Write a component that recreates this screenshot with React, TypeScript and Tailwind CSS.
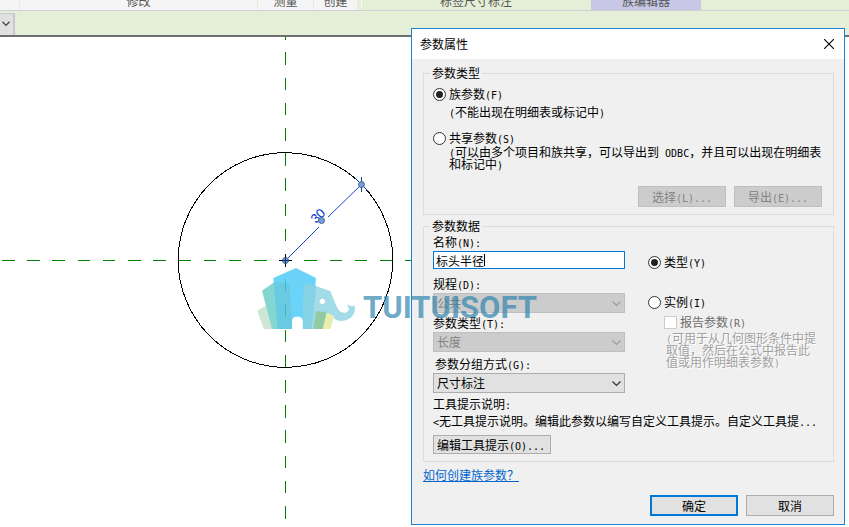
import React, { useState } from "react";

const CJK = "font-['Noto_Sans_CJK_SC',sans-serif]";

/* Half-width Latin run, six pixels for each character; it never adds to the line's height */
function Lat({ children }: { children: React.ReactNode }) {
  return <span className="font-['DejaVu_Sans_Mono',monospace] text-[10px] leading-[0]">{children}</span>;
}

function Radio({ id, name, defaultChecked, children }: { id: string; name: string; defaultChecked?: boolean; children: React.ReactNode }) {
  return (
    <div className="flex h-4 items-center gap-[3px]">
      <input
        id={id}
        type="radio"
        name={name}
        defaultChecked={defaultChecked}
        className="grid size-[13px] shrink-0 appearance-none place-content-center rounded-full border border-[#333] bg-white before:size-[7px] before:rounded-full checked:before:bg-[#222]"
      />
      <label htmlFor={id}>{children}</label>
    </div>
  );
}

function Group({ title, children }: { title: string; children: React.ReactNode }) {
  return (
    <fieldset className="min-w-0 border border-[#dcdcdc] px-[6px] pb-[7px]">
      <legend className="px-[2px] leading-4">{title}</legend>
      <div className="px-[3px]">{children}</div>
    </fieldset>
  );
}

function Combo({ id, value, disabled }: { id: string; value: string; disabled?: boolean }) {
  return (
    <div className="relative h-5 w-48">
      <select
        id={id}
        disabled={disabled}
        className="block h-5 w-full appearance-none border border-[#adadad] bg-[#e1e1e1] pl-[3px] text-xs leading-4 text-black opacity-100 disabled:border-[#bfbfbf] disabled:bg-[#ccc] disabled:text-[#838383]"
      >
        <option>{value}</option>
      </select>
      <svg className="pointer-events-none absolute top-[7px] right-1 h-[7px] w-[9px]" viewBox="0 0 9 7" fill="none">
        <path d="M0.5 1.5L4.5 5.5L8.5 1.5" stroke={disabled ? "#9c9c9c" : "#333"} strokeWidth="1.2" />
      </svg>
    </div>
  );
}

function Push({ children, disabled, primary }: { children: React.ReactNode; disabled?: boolean; primary?: boolean }) {
  return (
    <button
      type="button"
      disabled={disabled}
      className={
        "flex h-[21px] w-[88px] items-center justify-center leading-4 disabled:border-[#bfbfbf] disabled:bg-[#ccc] disabled:text-[#838383] " +
        (primary ? "border-2 border-[#0078d7] bg-[#e1e1e1]" : "border border-[#adadad] bg-[#e1e1e1]")
      }
    >
      <span>{children}</span>
    </button>
  );
}

function Ribbon() {
  const panel = "flex h-[10px] items-end justify-center overflow-hidden pb-px leading-4 whitespace-nowrap";
  return (
    <header className="bg-[#e5efd7] text-xs text-[#555]">
      <div className="flex h-[11px] gap-px border-b border-[#d0d0d8]">
        <div className={panel + " w-[19px] bg-[#f5f5f5]"} />
        <div className={panel + " w-[237px] bg-[#f5f5f5]"}>修改</div>
        <div className={panel + " w-[55px] bg-[#f5f5f5]"}>测量</div>
        <div className={panel + " w-[43px] bg-[#f5f5f5]"}>创建</div>
        <div className={panel + " ml-[3px] w-[229px] border-l border-[#f5f5f5]"}>标签尺寸标注</div>
        <div className={panel + " w-[110px] bg-[#c8c8e6]"}>族编辑器</div>
      </div>
      <div className="flex h-[26px] items-start border-b-2 border-[#6e6e6e] pt-[2px]">
        <div className="relative h-[22px] w-[15px]">
          <select aria-label="类型" className="block h-[22px] w-full appearance-none border-t border-r-2 border-[#c8c8d0] bg-[#e1e1e1]">
            <option></option>
          </select>
          <svg className="pointer-events-none absolute top-2 left-[2px] h-[6px] w-2" viewBox="0 0 8 6" fill="none">
            <path d="M0.5 0.8L4 4.4L7.5 0.8" stroke="#444" strokeWidth="1.3" />
          </svg>
        </div>
      </div>
    </header>
  );
}

function Drawing() {
  return (
    <svg className="block w-full flex-1 bg-white" role="img" aria-label="标头">
      <g transform="translate(0 -37)">
        <g stroke="#008000" strokeDasharray="12.5 12.7" shapeRendering="crispEdges">
          <path d="M2 260.5H420" />
          <path d="M285.5 27.2V520" />
        </g>
        <circle cx="285.5" cy="260" r="107.3" fill="none" stroke="#000" shapeRendering="crispEdges" />
        <path d="M285.5 260.5L319 227M328 217L361.5 184.5" stroke="#0033cc" strokeWidth="0.9" />
        <text
          transform="translate(321 219) rotate(-45)"
          textAnchor="middle"
          fontFamily="Liberation Sans, sans-serif"
          fontSize="13"
          fill="#0033cc"
        >
          30
        </text>
        <path d="M361.5 177V192M355 178L368 191" stroke="#0b3f9e" />
        <path d="M279 260.5H292M285.5 254V267" stroke="#000" />
        <g fill="#6f9fe0" stroke="#56657c">
          <circle cx="361.5" cy="184.5" r="3" />
          <circle cx="321.5" cy="220.5" r="3" />
          <circle cx="285.5" cy="260.5" r="3" />
        </g>
        <path d="M285.5 257V264M282 260.5H289" stroke="#12356f" />
        <g transform="translate(170 140) scale(0.33333)" opacity="0.85">
          <path d="M262 512L304 487L335 567H281Z" fill="#c6e2cd" />
          <path d="M276 452L312 427L360 430L366 567H306Z" fill="#6fd0c8" />
          <path d="M310 414L378 384L438 414L425 567H398V545Q398 530 382 530Q366 530 366 545V567H323Z" fill="#52cbf7" />
          <path d="M311 427L358 430L366 545V567H323Z" fill="#4dbccb" fillOpacity="0.6" />
          <path
            d="M402 432L437 438L481 453L498 495Q508 522 526 518Q538 514 536 504Q531 499 533 494Q542 501 554 497Q558 516 544 532Q524 548 499 540Q484 532 474 520L460 567H398Z"
            fill="#94d6e5"
          />
          <path d="M402 432L438 438L426 567H398Z" fill="#5fc4df" fillOpacity="0.65" />
          <path d="M438 514L470 516L460 567H430Z" fill="#7fc193" />
          <path d="M470 518L493 529L481 567H458Z" fill="#e5eda0" />
          <path d="M366 567V545Q366 530 382 530Q398 530 398 545V567Z" fill="#fff" />
          <circle cx="457" cy="484" r="8" fill="#fff" />
        </g>
      </g>
    </svg>
  );
}

function PropertiesDialog() {
  const [name, setName] = useState("标头半径");
  return (
    <section
      role="dialog"
      aria-labelledby="title"
      className="absolute top-7 left-[411px] w-[434px] border border-[#1883d7] bg-[#f0f0f0] text-xs leading-4 text-black"
    >
      <div className="flex h-[30px] items-center justify-between bg-white pr-[10px] pl-2">
        <h1 id="title">参数属性</h1>
        <button type="button" aria-label="关闭">
          <svg className="block size-[10px]" viewBox="0 0 10 10">
            <path d="M0 0L10 10M10 0L0 10" stroke="#000" strokeWidth="1.1" />
          </svg>
        </button>
      </div>

      <form className="flex flex-col gap-[3px] pt-[6px] pr-[10px] pb-2 pl-[11px]" onSubmit={(e) => e.preventDefault()}>
        <Group title="参数类型">
          <div className="pt-[5px]">
            <Radio id="family" name="kind" defaultChecked>
              族参数<Lat>(F)</Lat>
            </Radio>
          </div>
          <p className="mt-[2px] pl-4">
            <Lat>(</Lat>不能出现在明细表或标记中<Lat>)</Lat>
          </p>
          <div className="pt-[10px]">
            <Radio id="shared" name="kind">
              共享参数<Lat>(S)</Lat>
            </Radio>
          </div>
          <p className="pl-4 leading-3">
            <Lat>(</Lat>可以由多个项目和族共享，可以导出到<Lat> ODBC</Lat>，并且可以出现在明细表
            <br />
            和标记中<Lat>)</Lat>
          </p>
          <div className="mt-4 flex justify-end gap-2 pr-[2px]">
            <Push disabled>
              选择<Lat>(L)...</Lat>
            </Push>
            <Push disabled>
              导出<Lat>(E)...</Lat>
            </Push>
          </div>
        </Group>

        <Group title="参数数据">
          <div className="flex gap-[23px]">
            <div className="w-48 shrink-0">
              <label htmlFor="name" className="block">
                名称<Lat>(N):</Lat>
              </label>
              <div className="relative mt-px h-[18px]">
                <input
                  id="name"
                  type="text"
                  value={name}
                  onChange={(e) => setName(e.target.value)}
                  className="block h-[18px] w-full border border-[#0078d7] bg-white px-[2px] leading-4 outline-none"
                />
                <span className="absolute top-[3px] left-[51px] h-3 w-px bg-black" />
              </div>
              <label htmlFor="discipline" className="mt-[7px] mb-px block">
                规程<Lat>(D):</Lat>
              </label>
              <Combo id="discipline" value="公共" disabled />
              <label htmlFor="ptype" className="mt-[2px] mb-px block">
                参数类型<Lat>(T):</Lat>
              </label>
              <Combo id="ptype" value="长度" disabled />
              <label htmlFor="group" className="mt-1 mb-px block pl-[2px]">
                参数分组方式<Lat>(G):</Lat>
              </label>
              <Combo id="group" value="尺寸标注" />
            </div>
            <div className="min-w-0 flex-1 pt-5">
              <Radio id="type" name="scope" defaultChecked>
                类型<Lat>(Y)</Lat>
              </Radio>
              <div className="pt-6">
                <Radio id="instance" name="scope">
                  实例<Lat>(I)</Lat>
                </Radio>
              </div>
              <div className="mt-1 flex h-4 items-center gap-[3px] pl-4 text-[#6d6d6d]">
                <input id="report" type="checkbox" disabled className="size-[13px] appearance-none border border-[#ccc] bg-white" />
                <label htmlFor="report">
                  报告参数<Lat>(R)</Lat>
                </label>
              </div>
              <p className="mt-[2px] pl-[18px] leading-3 whitespace-nowrap text-[#a0a0a0] [text-shadow:1px_1px_0_#fff]">
                <Lat>(</Lat>可用于从几何图形条件中提
                <br />
                取值，然后在公式中报告此
                <br />
                值或用作明细表参数<Lat>)</Lat>
              </p>
            </div>
          </div>
          <p className="mt-[3px]">
            工具提示说明<Lat>:</Lat>
          </p>
          <p className="mt-px whitespace-nowrap">
            <Lat>&lt;</Lat>无工具提示说明。编辑此参数以编写自定义工具提示。自定义工具提<Lat>...</Lat>
          </p>
          <button type="button" className="mt-[6px] flex h-[19px] w-[118px] items-center border border-[#adadad] bg-[#e1e1e1] pl-[3px]">
            <span>
              编辑工具提示<Lat>(O)...</Lat>
            </span>
          </button>
        </Group>

        <a href="#help" className="mt-[2px] self-start text-[#0066cc] underline">
          如何创建族参数？
        </a>
        <div className="mt-[9px] flex justify-end gap-2">
          <Push primary>确定</Push>
          <Push>取消</Push>
        </div>
      </form>
    </section>
  );
}

export default function App() {
  return (
    <div className={"relative flex min-h-screen flex-col overflow-hidden bg-white " + CJK}>
      <Ribbon />
      <Drawing />
      <PropertiesDialog />
      <p className="pointer-events-none absolute top-[292px] left-[363px] font-['Roboto',sans-serif] text-[31px] leading-8 font-bold text-[#2e84ad]/70">
        TUITUISOFT
      </p>
    </div>
  );
}
